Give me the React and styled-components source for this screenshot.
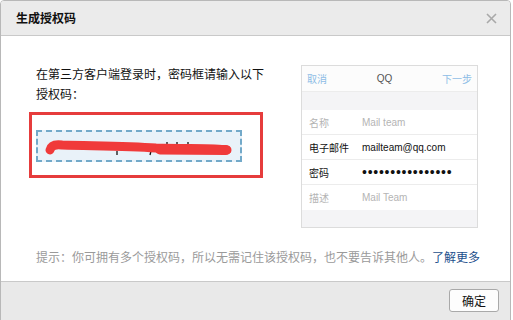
import React from 'react';
import styled, { createGlobalStyle } from 'styled-components';

const GlobalStyle = createGlobalStyle`
  html, body {
    margin: 0;
    padding: 0;
    background: #ffffff;
  }
  body {
    font-family: "Liberation Sans", Arial, "Noto Sans CJK SC", sans-serif;
    font-size: 12px;
    color: #222;
  }
`;

const Dialog = styled.div`
  width: 509px;
  height: 330px;
  border: 1px solid #b8b8b8;
  border-radius: 4px 4px 0 0;
  display: flex;
  flex-direction: column;
  overflow: hidden;
  background: #fff;
`;

const Header = styled.div`
  height: 34px;
  background: #ebebeb;
  border-bottom: 1px solid #c9c9c9;
  display: flex;
  align-items: center;
  justify-content: space-between;
  padding: 0 13px 0 15px;
`;

const Title = styled.h4`
  margin: 0;
  font-size: 12px;
  font-weight: bold;
  color: #111;
  font-family: "Noto Sans CJK SC", sans-serif;
  line-height: 16px;
`;

const CloseButton = styled.button`
  width: 12px;
  height: 12px;
  padding: 0;
  border: none;
  background: transparent;
  display: flex;
  align-items: center;
  justify-content: center;
  cursor: pointer;
`;

const Body = styled.div`
  padding: 28px 32px 0 35px;
  height: 217px;
  display: flex;
  flex-direction: column;
`;

const Row = styled.div`
  display: flex;
  align-items: flex-start;
`;

const LeftColumn = styled.div`
  flex: 1;
`;

const Intro = styled.p`
  margin: 0;
  width: 232px;
  font-size: 12px;
  line-height: 20px;
  color: #111;
  font-family: "Noto Sans CJK SC", sans-serif;
`;

const Highlight = styled.div`
  margin: 8px 0 0 -7px;
  width: 234px;
  height: 66px;
  border: 3px solid #e63c3c;
  padding: 15px 0 0 4px;
  box-sizing: border-box;
`;

const CodeBox = styled.div`
  width: 202px;
  height: 28px;
  border: 2px dashed #72a9c9;
  background: #e9f2f9;
  position: relative;
`;

const Phone = styled.div`
  width: 175px;
  height: 161px;
  border: 1px solid #dcdcdc;
  background: #f4f4f6;
  margin-top: 1px;
  font-size: 10px;
  font-family: "Liberation Sans", Arial, "Noto Sans CJK SC", sans-serif;
`;

const PhoneBar = styled.div`
  height: 25px;
  background: #fcfcfc;
  border-bottom: 1px solid #ececec;
  display: flex;
  align-items: center;
  justify-content: space-between;
  padding: 0 5px 0 5px;
  color: #8ebde6;
`;

const BarTitle = styled.span`
  color: #555;
`;

const Gap = styled.div`
  height: 18px;
`;

const Field = styled.div`
  height: 24px;
  background: #fff;
  display: grid;
  grid-template-columns: 53px 1fr;
  align-items: center;
  padding-left: 7px;
  border-bottom: 1px solid ${(p) => (p.last ? '#fff' : '#ececec')};
  color: ${(p) => (p.muted ? '#b4b4b4' : '#111')};
`;

const Dots = styled.span`
  font-size: 14px;
  letter-spacing: 0.75px;
  line-height: 10px;
`;

const Hint = styled.p`
  margin: 19px 0 0 0;
  font-size: 12px;
  line-height: 20px;
  color: #9a9a9a;
  font-family: "Noto Sans CJK SC", sans-serif;
  white-space: nowrap;
`;

const MoreLink = styled.a`
  color: #1d4f8c;
  text-decoration: none;
`;

const Footer = styled.div`
  flex: 1;
  background: #e9e9e9;
  border-top: 1px solid #c9c9c9;
  display: flex;
  justify-content: flex-end;
  align-items: flex-start;
  padding: 7px 11px 0 0;
`;

const OkButton = styled.button`
  width: 50px;
  height: 23px;
  background: #fdfdfd;
  border: 1px solid #a9a9a9;
  border-radius: 3px;
  font-size: 12px;
  color: #111;
  font-family: "Noto Sans CJK SC", sans-serif;
  padding: 0;
  cursor: pointer;
`;

const Scribble = () => (
  <svg width="202" height="28" viewBox="0 0 202 28" style={{ position: 'absolute', left: 0, top: 0 }}>
    <g stroke="#111" strokeWidth="1.3">
      <line x1="79" y1="19" x2="79" y2="23" />
      <line x1="113" y1="19" x2="112" y2="23" />
      <line x1="129" y1="10" x2="129" y2="13" />
      <line x1="139" y1="10" x2="139" y2="13" />
      <line x1="150" y1="10" x2="150" y2="13" />
    </g>
    <path
      d="M12 18 C 13 14, 17 12, 24 13 C 60 14, 90 14, 118 16 C 150 17, 175 16, 189 18"
      fill="none"
      stroke="#f03a3a"
      strokeWidth="9"
      strokeLinecap="round"
    />
    <path d="M122 17.5 L 188 18" fill="none" stroke="#f03a3a" strokeWidth="10" strokeLinecap="round" />
  </svg>
);

const App = () => (
  <>
    <GlobalStyle />
    <Dialog>
      <Header>
        <Title>生成授权码</Title>
        <CloseButton aria-label="关闭">
          <svg width="11" height="11" viewBox="0 0 11 11">
            <path d="M1 1 L10 10 M10 1 L1 10" stroke="#a9a9a9" strokeWidth="1.6" />
          </svg>
        </CloseButton>
      </Header>
      <Body>
        <Row>
          <LeftColumn>
            <Intro>在第三方客户端登录时，密码框请输入以下授权码：</Intro>
            <Highlight>
              <CodeBox>
                <Scribble />
              </CodeBox>
            </Highlight>
          </LeftColumn>
          <Phone>
            <PhoneBar>
              <span>取消</span>
              <BarTitle>QQ</BarTitle>
              <span>下一步</span>
            </PhoneBar>
            <Gap />
            <Field muted>
              <span>名称</span>
              <span>Mail team</span>
            </Field>
            <Field>
              <span>电子邮件</span>
              <span>mailteam@qq.com</span>
            </Field>
            <Field>
              <span>密码</span>
              <Dots>••••••••••••••••</Dots>
            </Field>
            <Field muted last>
              <span>描述</span>
              <span>Mail Team</span>
            </Field>
          </Phone>
        </Row>
        <Hint>
          提示：你可拥有多个授权码，所以无需记住该授权码，也不要告诉其他人。<MoreLink href="#">了解更多</MoreLink>
        </Hint>
      </Body>
      <Footer>
        <OkButton>确定</OkButton>
      </Footer>
    </Dialog>
  </>
);

export default App;
